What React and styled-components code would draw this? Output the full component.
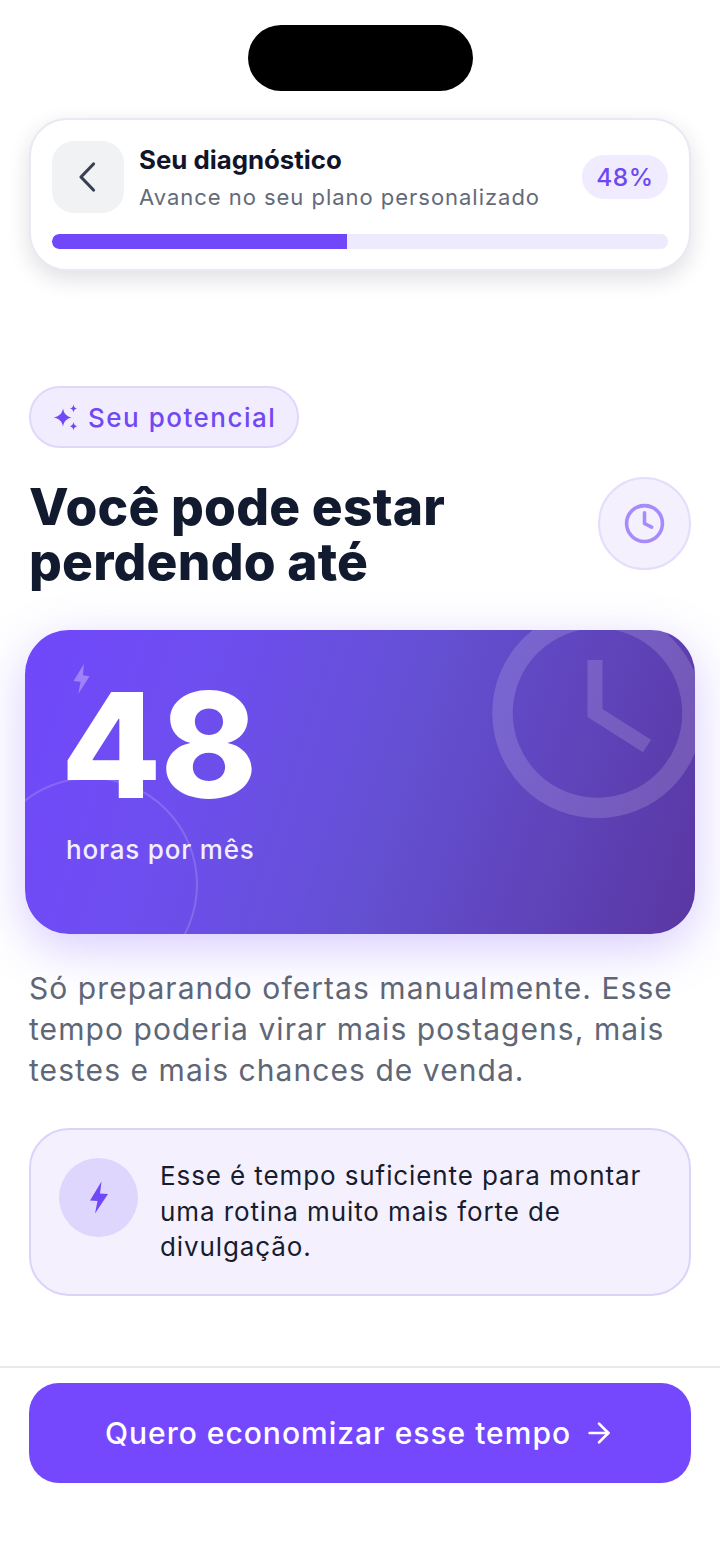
import React from "react";
import styled, { createGlobalStyle } from "styled-components";
import { Clock, ArrowRight } from "lucide-react";

const Global = createGlobalStyle`
  html, body { margin: 0; padding: 0; background: #fff; }
  * { box-sizing: border-box; }
  body { font-family: Inter, "Noto Sans", sans-serif; }
`;
const Page = styled.div`
  width: 720px; height: 1565px; background: #fff; overflow: hidden;
  display: flex; flex-direction: column;
`;
const Island = styled.div`
  width: 225px; height: 66px; border-radius: 33px; background: #000;
  margin: 25px auto 27px; flex: none;
`;
const TopCard = styled.section`
  margin: 0 29px; height: 153px; padding: 21px 21px 0; background: #fff; flex: none;
  border: 2px solid #e9e8f3; border-radius: 38px;
  box-shadow: 0 8px 22px rgba(30, 30, 60, 0.14);
`;
const TopRow = styled.div`display: flex; align-items: center; height: 72px;`;
const BackButton = styled.div`
  width: 72px; height: 72px; border-radius: 22px; background: #f1f2f4;
  display: flex; align-items: center; justify-content: center; flex: none;
`;
const TopText = styled.div`flex: 1; margin-left: 15px;`;
const TopTitle = styled.div`font-size: 25.8px; line-height: 32px; font-weight: 700; color: #11152b; margin-top: 2px;`;
const TopSub = styled.div`font-size: 22px; line-height: 32px; margin-top: 5px; font-weight: 400; color: #636a79; letter-spacing: 0.97px;`;
const Pct = styled.div`
  width: 86px; height: 44px; border-radius: 22px; background: #f0ebfe; color: #6f48f5;
  font-size: 24.5px; font-weight: 500; display: flex; align-items: center; justify-content: center;
  letter-spacing: 0.6px; margin-top: -1px;
`;
const Track = styled.div`height: 15px; margin-top: 21px; background: #eeeafe; border-radius: 7px; overflow: hidden;`;
const Fill = styled.div`height: 100%; background: #7048fa; border-radius: 7px 0 0 7px;`;
const Content = styled.main`padding: 0 29px; display: flex; flex-direction: column; flex: 1;`;
const Tag = styled.div`
  align-self: flex-start; margin-top: 115px; height: 62px; width: 270px; border-radius: 31px;
  background: #f2edfe; border: 2px solid #e0d7fb; color: #7048f5;
  display: flex; align-items: center; gap: 8px; padding-left: 22px;
  font-size: 26px; font-weight: 550; letter-spacing: 1.5px;
`;
const HeadingRow = styled.div`display: flex; justify-content: space-between; margin-top: 29px; height: 112px;`;
const Heading = styled.h1`
  margin: 2px 0 0; font-size: 51.5px; line-height: 54.5px; font-weight: 800; color: #111a2e;
  letter-spacing: 0.2px;
`;
const ClockBubble = styled.div`
  width: 93px; height: 93px; border-radius: 50%; background: #f4f0fe; border: 2px solid #e4ddfb;
  color: #a78bfa; display: flex; align-items: center; justify-content: center; flex: none;
`;
const Hero = styled.section`
  position: relative; overflow: hidden; margin: 41px -4px 0; height: 304px; border-radius: 44px; flex: none;
  background: linear-gradient(108deg, #7048fb 0%, #6e4ef0 25%, #6450d2 55%, #5a37a2 100%);
  padding: 35px 0 0 41px; color: #fff;
  box-shadow: 0 14px 50px rgba(112, 72, 250, 0.28);
`;
const Number = styled.div`font-size: 146px; line-height: 158px; font-weight: 800; letter-spacing: -1px; margin: 1px 0 0 -5px; position: relative;`;
const HeroUnit = styled.div`font-size: 26px; line-height: 32px; font-weight: 500; margin-top: 10px; position: relative; color: #f3eeff; letter-spacing: 0.8px;`;
const Deco = styled.svg`position: absolute; pointer-events: none;`;
const Ring = styled.div`
  position: absolute; left: -42px; top: 147px; width: 215px; height: 215px; border-radius: 50%;
  border: 2.5px solid rgba(255,255,255,0.16);
`;
const Body = styled.p`
  margin: 34px 0 0; font-size: 30px; line-height: 41px; color: #5f6776; font-weight: 400; letter-spacing: 1.06px;
`;
const InfoBox = styled.div`
  margin-top: 37px; height: 168px; border-radius: 40px; background: #f4f0fe; border: 2px solid #dcd3f8; flex: none;
  display: flex; align-items: flex-start; padding: 28px 0 0 28px; gap: 22px;
`;
const InfoIcon = styled.div`
  width: 79px; height: 79px; border-radius: 50%; background: #ded6fd; flex: none;
  display: flex; align-items: center; justify-content: center;
`;
const InfoText = styled.div`font-size: 26px; line-height: 35.5px; color: #171c2e; font-weight: 400; letter-spacing: 0.9px; margin-top: 0; width: 510px;`;
const Footer = styled.footer`
  border-top: 2px solid #e8e8ef; padding: 15px 29px 0; height: 199px; flex: none; background: #fff;
`;
const Cta = styled.button`
  width: 100%; height: 100px; border: 0; border-radius: 30px; background: #7548fd; color: #fff;
  font: 500 30px Inter, sans-serif; letter-spacing: 1px;
  display: flex; align-items: center; justify-content: center; gap: 12px;
`;

const Chevron = () => (
  <svg width="20" height="32" viewBox="0 0 20 32" fill="none" stroke="#374151" strokeWidth="3.2" strokeLinecap="round" strokeLinejoin="round">
    <path d="M15.5 3 L3 16 L15.5 29" />
  </svg>
);
const Sparkles = () => (
  <svg width="27" height="27" viewBox="0 0 27 27" fill="#7048f5">
    <path d="M10 4.5 C11 9.5 13 12 18.5 13.5 C13 15 11 17.5 10 22.5 C9 17.5 7 15 0.5 13.5 C7 12 9 9.5 10 4.5Z" />
    <path d="M20.5 0.5 C21 3 21.7 3.8 24 4.5 C21.7 5.2 21 6 20.5 8.5 C20 6 19.3 5.2 17 4.5 C19.3 3.8 20 3 20.5 0.5Z" />
    <path d="M20.5 18 C21 20.5 21.7 21.3 24 22.2 C21.7 23 21 23.8 20.5 26.5 C20 23.8 19.3 23 17 22.2 C19.3 21.3 20 20.5 20.5 18Z" />
  </svg>
);
const Bolt = ({ w, h, color }) => (
  <svg width={w} height={h} viewBox="0 0 18 32" fill={color}>
    <path d="M11.5 0 L0 19 L7.5 19.5 L5 32 L18 12.5 L10 12 Z" />
  </svg>
);

export default function App() {
  return (
    <Page>
      <Global />
      <Island />
      <TopCard>
        <TopRow>
          <BackButton><Chevron /></BackButton>
          <TopText>
            <TopTitle>Seu diagnóstico</TopTitle>
            <TopSub>Avance no seu plano personalizado</TopSub>
          </TopText>
          <Pct>48%</Pct>
        </TopRow>
        <Track><Fill style={{ width: "47.9%" }} /></Track>
      </TopCard>
      <Content>
        <Tag><Sparkles />Seu potencial</Tag>
        <HeadingRow>
          <Heading>Você pode estar<br />perdendo até</Heading>
          <ClockBubble><Clock size={43} strokeWidth={2} /></ClockBubble>
        </HeadingRow>
        <Hero>
          <Ring />
          <Deco width="240" height="230" viewBox="0 0 240 230" fill="none" style={{ left: 456, top: -32 }} stroke="rgba(255,255,255,0.15)">
            <circle cx="116.5" cy="115" r="95" strokeWidth="20.5" />
            <path d="M114 62 L114 115 L166 148" strokeWidth="15" />
          </Deco>
          <Deco width="18" height="30" viewBox="0 0 18 32" style={{ left: 48, top: 34 }}>
            <path fill="#9f82fb" d="M11 0 L0 18 L7.5 19 L5 32 L17 13 L10 12 Z" />
          </Deco>
          <Number>48</Number>
          <HeroUnit>horas por mês</HeroUnit>
        </Hero>
        <Body>Só preparando ofertas manualmente. Esse tempo poderia virar mais postagens, mais testes e mais chances de venda.</Body>
        <InfoBox>
          <InfoIcon><Bolt w={18} h={33} color="#7048fa" /></InfoIcon>
          <InfoText>Esse é tempo suficiente para montar uma rotina muito mais forte de divulgação.</InfoText>
        </InfoBox>
      </Content>
      <Footer>
        <Cta>Quero economizar esse tempo <ArrowRight size={32} strokeWidth={2} /></Cta>
      </Footer>
    </Page>
  );
}
